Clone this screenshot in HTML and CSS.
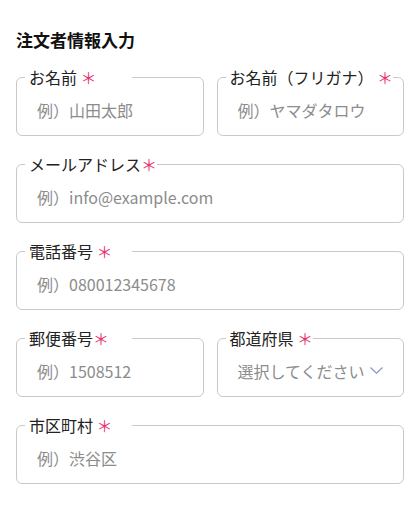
FILE: index.html
```html
<!DOCTYPE html>
<html lang="ja">
<head>
    <meta charset="UTF-8">
    <meta name="viewport" content="width=device-width, initial-scale=1.0">
    <title>注文者情報入力</title>
    <link rel="stylesheet" href="styles.css">
</head>
<body>
    <div class="container">
        <h2>注文者情報入力</h2>
        <form class="form">
            <div class="row">
                <fieldset class="field">
                    <legend class="wide">お名前 <span class="req">＊</span></legend>
                    <input type="text" placeholder="例）山田太郎">
                </fieldset>
                <fieldset class="field">
                    <legend>お名前（フリガナ） <span class="req">＊</span></legend>
                    <input type="text" placeholder="例）ヤマダタロウ">
                </fieldset>
            </div>
            <fieldset class="field">
                <legend>メールアドレス<span class="req">＊</span></legend>
                <input type="email" placeholder="例）info@example.com">
            </fieldset>
            <fieldset class="field">
                <legend class="wide">電話番号 <span class="req">＊</span></legend>
                <input type="tel" placeholder="例）080012345678">
            </fieldset>
            <div class="row">
                <fieldset class="field">
                    <legend class="wide">郵便番号<span class="req">＊</span></legend>
                    <input type="text" placeholder="例）1508512">
                </fieldset>
                <fieldset class="field">
                    <legend>都道府県 <span class="req">＊</span></legend>
                    <div class="select">
                        <span>選択してください</span>
                        <svg width="13" height="7" viewBox="0 0 13 7">
                            <polyline points="0.5,0.5 6.5,6.2 12.5,0.5" fill="none" stroke="#8b90c6" stroke-width="1.1"/>
                        </svg>
                    </div>
                </fieldset>
            </div>
            <fieldset class="field">
                <legend class="wide">市区町村 <span class="req">＊</span></legend>
                <input type="text" placeholder="例）渋谷区">
            </fieldset>
        </form>
    </div>
</body>
</html>
```

FILE: styles.css
```css
body {
    margin: 0;
    font-family: "Noto Sans CJK JP", "Noto Sans", sans-serif;
    background-color: #fff;
    color: #222;
}
.container {
    padding: 27px 16px 20px;
}
h2 {
    margin: 0 0 13px;
    font-size: 17px;
    line-height: 26px;
    font-weight: bold;
    color: #111;
}
.form {
    display: flex;
    flex-direction: column;
    gap: 17px;
}
.row {
    display: grid;
    grid-template-columns: 1fr 1fr;
    gap: 13px;
}
.field {
    margin: 0;
    min-width: 0;
    padding: 0 0 4px 8px;
    border: 1px solid #c9c9c9;
    border-radius: 6px;
}
.field legend {
    padding: 0 0 0 4px;
    font-size: 16px;
    line-height: 22px;
    color: #222;
}
.field legend.wide {
    box-sizing: border-box;
    min-width: 107px;
}
.req {
    color: #e8336b;
}
.field input {
    display: block;
    box-sizing: border-box;
    width: 100%;
    height: 43px;
    padding: 0 12px;
    border: none;
    outline: none;
    background: transparent;
    font-family: inherit;
    font-size: 16px;
    color: #222;
}
.field input::placeholder {
    color: #8c8c8c;
}
.select {
    display: flex;
    align-items: center;
    gap: 6px;
    height: 43px;
    padding: 0 20px 0 12px;
    font-size: 16px;
    color: #8c8c8c;
    cursor: pointer;
}
.select span {
    flex: 1;
    white-space: nowrap;
    overflow: hidden;
}
```
